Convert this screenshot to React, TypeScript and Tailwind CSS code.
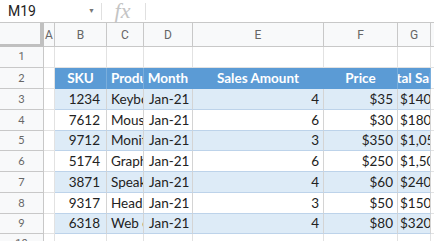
import React from 'react';

interface RowData {
  sku: string;
  product: string;
  month: string;
  amount: string;
  price: string;
  total: string;
}

const rows: RowData[] = [
  { sku: '1234', product: 'Keyboard', month: 'Jan-21', amount: '4', price: '$35', total: '$140' },
  { sku: '7612', product: 'Mouse', month: 'Jan-21', amount: '6', price: '$30', total: '$180' },
  { sku: '9712', product: 'Monitor', month: 'Jan-21', amount: '3', price: '$350', total: '$1,050' },
  { sku: '5174', product: 'Graphics Card', month: 'Jan-21', amount: '6', price: '$250', total: '$1,500' },
  { sku: '3871', product: 'Speakers', month: 'Jan-21', amount: '4', price: '$60', total: '$240' },
  { sku: '9317', product: 'Headphones', month: 'Jan-21', amount: '3', price: '$50', total: '$150' },
  { sku: '6318', product: 'Web cam', month: 'Jan-21', amount: '4', price: '$80', total: '$320' },
];

// row heights for rows 3..9
const heights = ['h-[21px]', 'h-[21px]', 'h-[20px]', 'h-[21px]', 'h-[21px]', 'h-[21px]', 'h-[20px]'];

const letters = [
  { l: 'A', w: 'w-[11px]' },
  { l: 'B', w: 'w-[52px]' },
  { l: 'C', w: 'w-[37px]' },
  { l: 'D', w: 'w-[49px]' },
  { l: 'E', w: 'w-[131px]' },
  { l: 'F', w: 'w-[74px]' },
  { l: 'G', w: 'w-[33px]' },
];

const RowHead: React.FC<{ n: number }> = ({ n }) => (
  <div className="w-[44px] shrink-0 flex items-center justify-center border-r border-b border-[#c8c8c8] bg-[#f8f9fa] text-[11px] text-[#666]">
    {n}
  </div>
);

const App: React.FC = () => {
  return (
    <div className="w-[434px] h-[241px] overflow-hidden bg-white font-['Roboto',sans-serif]">
      {/* formula bar */}
      <div className="h-[23px] flex items-center border-b border-[#c8c8c8]">
        <div className="w-[101px] flex items-center justify-between pl-[8px] pr-[6px]">
          <span className="text-[14px] text-[#222]">M19</span>
          <span className="text-[7px] text-[#777]">▼</span>
        </div>
        <div className="h-[17px] w-px bg-[#e0e0e0]" />
        <div className="w-[43px] flex justify-center">
          <span className="italic text-[#c4c4c4] text-[22px] leading-none font-['Liberation_Serif',serif] pr-[2px]">fx</span>
        </div>
        <div className="h-[17px] w-px bg-[#e0e0e0]" />
      </div>

      {/* column headers */}
      <div className="flex h-[24px]">
        <div className="w-[44px] shrink-0 bg-[#f8f9fa] border-r-4 border-b-[3px] border-[#c0c0c0] h-[24px]" />
        {letters.map((c) => (
          <div
            key={c.l}
            className={`${c.w} shrink-0 flex items-center justify-center bg-[#f8f9fa] border-r border-b border-[#c8c8c8] text-[12px] text-[#666]`}
          >
            {c.l}
          </div>
        ))}
        <div className="flex-1 bg-[#f8f9fa] border-b border-[#c8c8c8]" />
      </div>

      {/* row 1 */}
      <div className="flex h-[21px]">
        <RowHead n={1} />
        {letters.map((c) => (
          <div key={c.l} className={`${c.w} shrink-0 border-r border-b border-[#e2e2e2]`} />
        ))}
        <div className="flex-1 border-b border-[#e2e2e2]" />
      </div>

      {/* row 2 header */}
      <div className="flex h-[21px] font-['Lato',sans-serif] text-[13.5px]">
        <RowHead n={2} />
        <div className="w-[11px] shrink-0 border-r border-b border-[#e2e2e2]" />
        <div className="w-[52px] shrink-0 flex items-center justify-center overflow-hidden whitespace-nowrap bg-[#5b9bd5] text-white font-bold border-r border-[#7aaedc]">SKU</div>
        <div className="w-[37px] shrink-0 flex items-center overflow-hidden whitespace-nowrap bg-[#5b9bd5] text-white font-bold pl-[4px] border-r border-[#7aaedc]">Product</div>
        <div className="w-[49px] shrink-0 flex items-center justify-center overflow-hidden whitespace-nowrap bg-[#5b9bd5] text-white font-bold border-r border-[#5b9bd5]">Month</div>
        <div className="w-[131px] shrink-0 flex items-center justify-center overflow-hidden whitespace-nowrap bg-[#5b9bd5] text-white font-bold border-r border-[#5b9bd5]">Sales Amount</div>
        <div className="w-[74px] shrink-0 flex items-center justify-center overflow-hidden whitespace-nowrap bg-[#5b9bd5] text-white font-bold border-r border-[#7aaedc]">Price</div>
        <div className="w-[33px] shrink-0 flex items-center justify-center overflow-hidden whitespace-nowrap bg-[#5b9bd5] text-white font-bold border-r border-[#7aaedc]">
          <span className="shrink-0">Total Sales</span>
        </div>
        <div className="flex-1 border-b border-[#e2e2e2]" />
      </div>

      {/* data */}
      {rows.map((r, i) => {
        const band = i % 2 === 0 ? 'bg-[#ddebf7]' : 'bg-white';
        const cell = `shrink-0 flex items-center overflow-hidden whitespace-nowrap ${band} border-r border-[#d4d4d4] border-b border-b-[#bdd3ea]`;
        return (
          <div key={r.sku} className={`flex ${heights[i]} font-['Lato',sans-serif] text-[13.5px] text-[#222]`}>
            <RowHead n={i + 3} />
            <div className="w-[11px] shrink-0 border-r border-b border-[#e2e2e2]" />
            <div className={`w-[52px] justify-end pr-[6px] ${cell}`}>{r.sku}</div>
            <div className={`w-[37px] pl-[4px] ${cell}`}>{r.product}</div>
            <div className={`w-[49px] pl-[5px] ${cell}`}>{r.month}</div>
            <div className={`w-[131px] justify-end pr-[4px] ${cell}`}>{r.amount}</div>
            <div className={`w-[74px] justify-end pr-[4px] ${cell}`}>{r.price}</div>
            <div className={`w-[33px] pl-[2px] ${cell}`}>{r.total}</div>
            <div className="flex-1 border-b border-[#e2e2e2]" />
          </div>
        );
      })}

      {/* row 10 */}
      <div className="flex h-[21px]">
        <RowHead n={10} />
        {letters.map((c) => (
          <div key={c.l} className={`${c.w} shrink-0 border-r border-b border-[#e2e2e2]`} />
        ))}
        <div className="flex-1 border-b border-[#e2e2e2]" />
      </div>
    </div>
  );
};

export default App;
